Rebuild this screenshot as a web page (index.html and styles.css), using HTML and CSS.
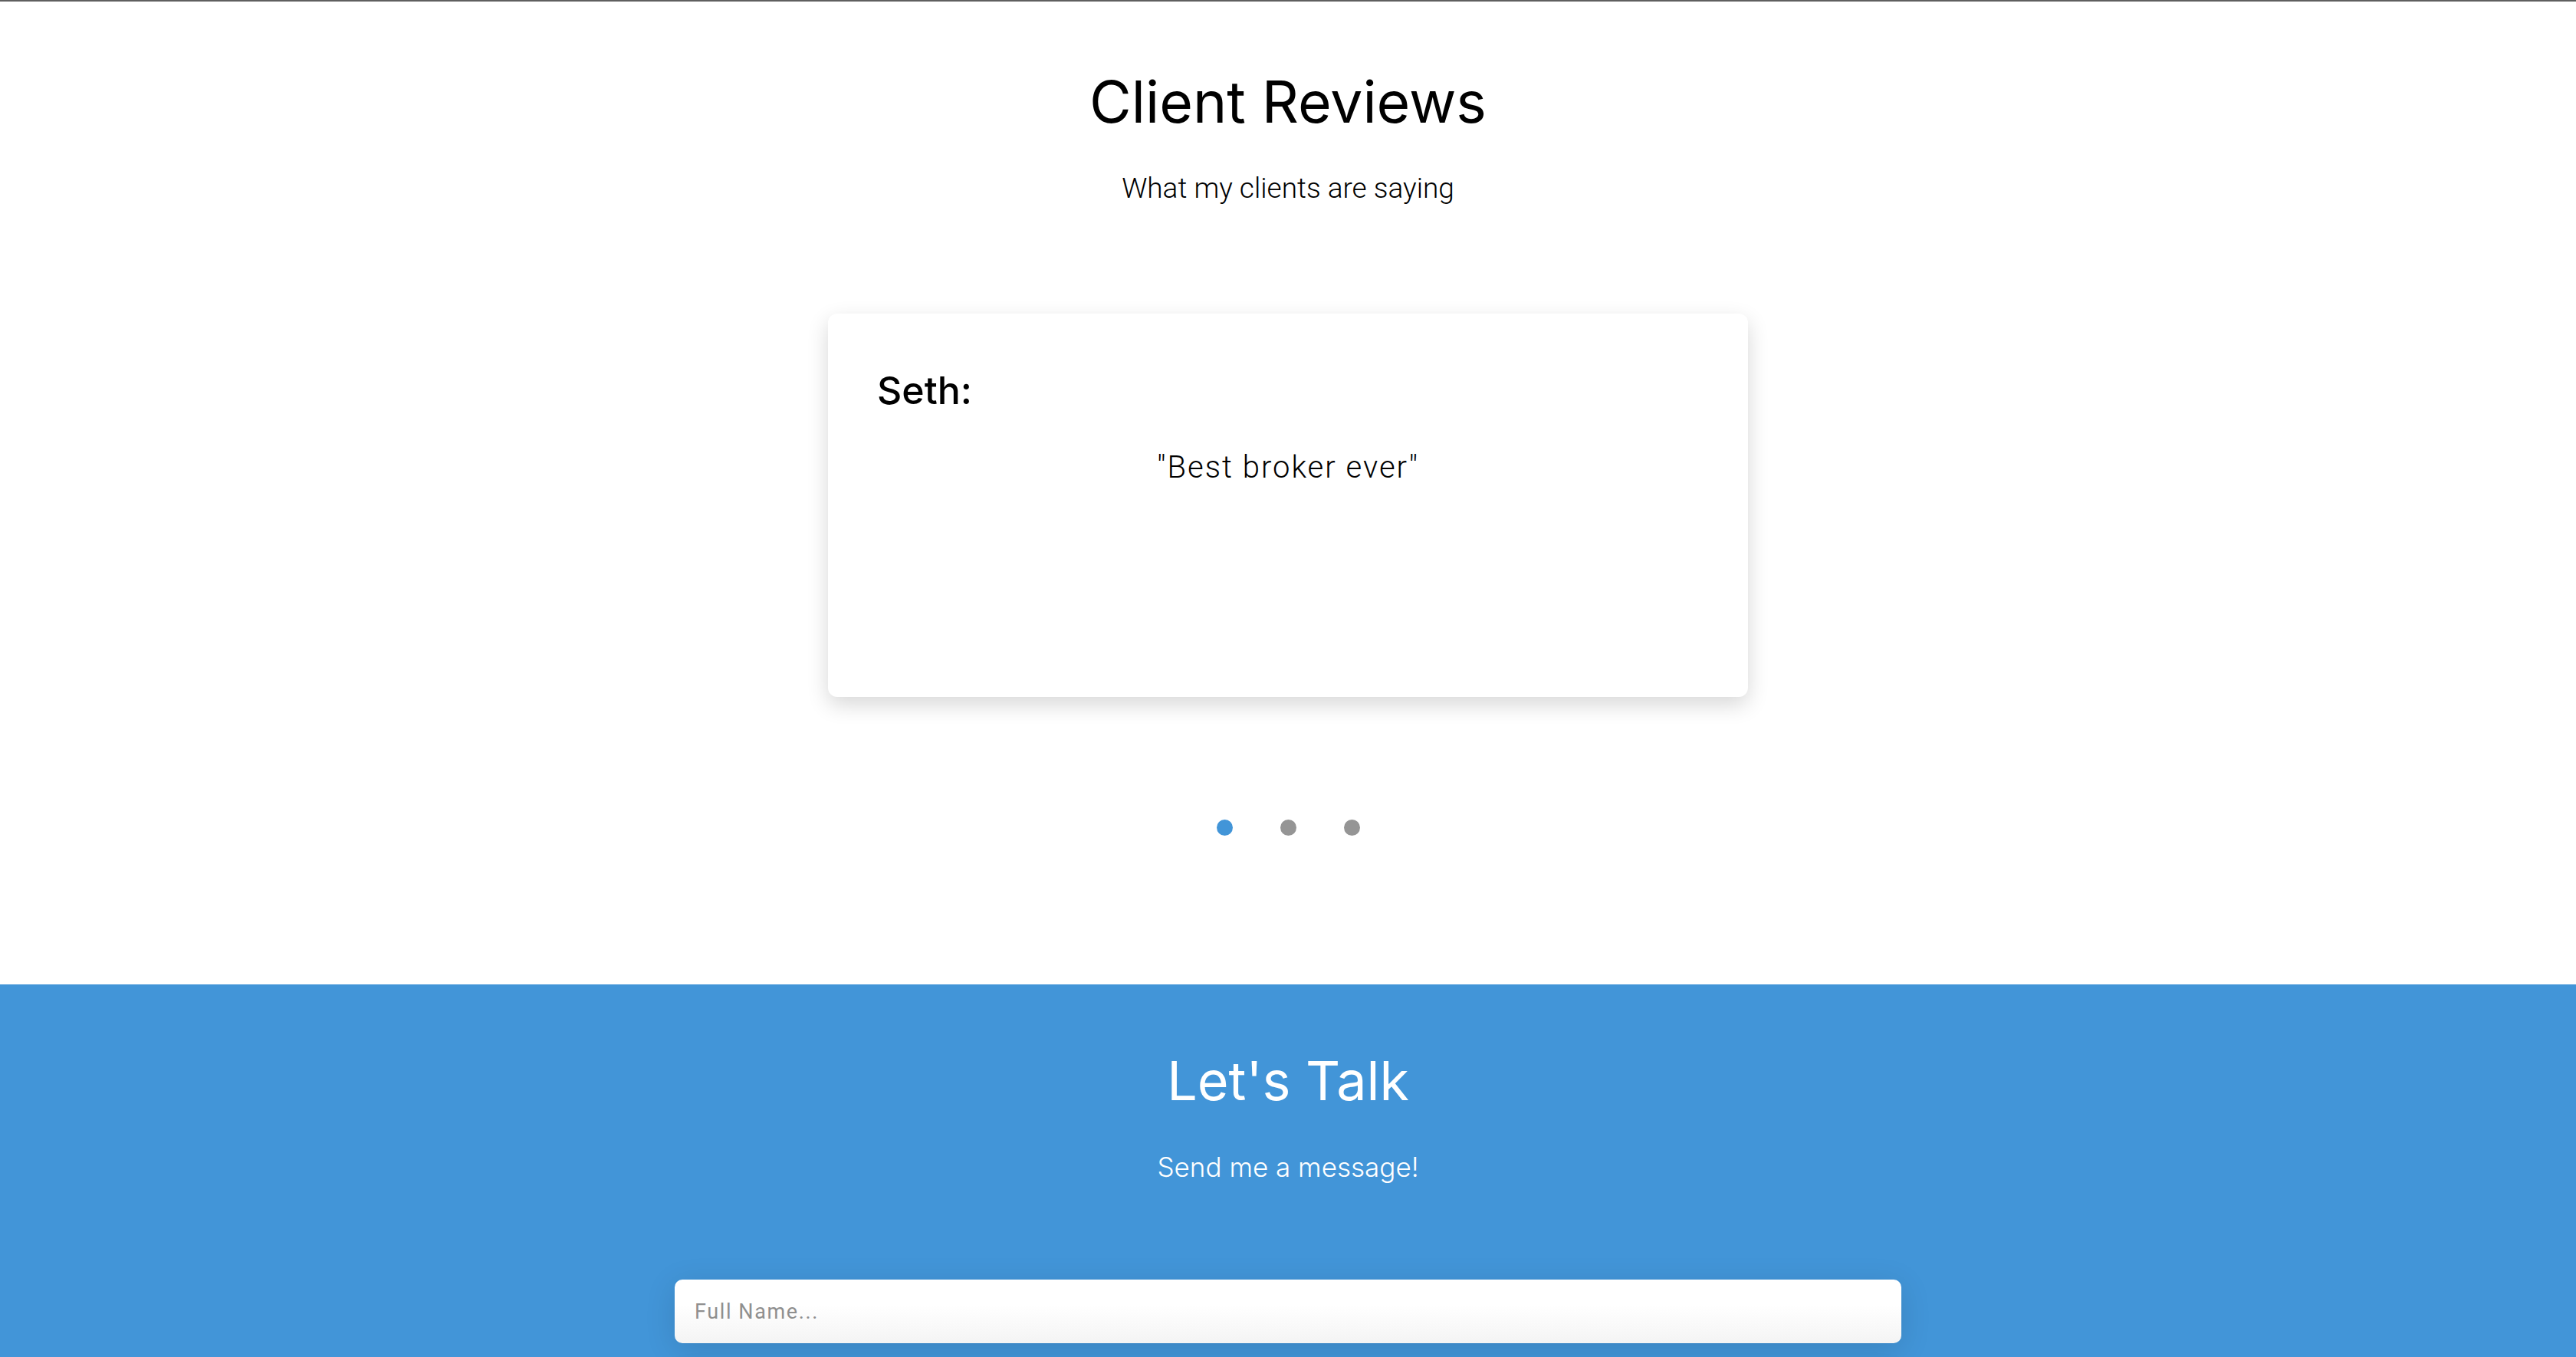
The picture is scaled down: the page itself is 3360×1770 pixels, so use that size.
FILE: index.html
```html
<!DOCTYPE html>
<html lang="en">
<head>
<meta charset="utf-8">
<title>Client Reviews</title>
<link rel="stylesheet" href="styles.css">
</head>
<body>
<section class="reviews">
  <h2 class="section-title">Client Reviews</h2>
  <p class="section-sub">What my clients are saying</p>
  <div class="slider">
    <article class="review-card">
      <h3 class="review-name">Seth:</h3>
      <p class="review-quote">"Best broker ever"</p>
    </article>
  </div>
  <div class="dots">
    <span class="dot active"></span>
    <span class="dot"></span>
    <span class="dot"></span>
  </div>
</section>
<section class="contact">
  <h2 class="contact-title">Let's Talk</h2>
  <p class="contact-sub">Send me a message!</p>
  <form class="contact-form">
    <input class="field" type="text" placeholder="Full Name...">
    <input class="field" type="email" placeholder="Email...">
    <textarea class="field area" placeholder="Message..."></textarea>
  </form>
</section>
</body>
</html>
```
FILE: styles.css
```css
html, body {
  margin: 0;
  padding: 0;
  background: #ffffff;
}
body {
  font-family: Roboto, "Liberation Sans", sans-serif;
  color: #000;
}
.reviews {
  border-top: 2px solid #5f5f5f;
  padding: 86px 0 0;
  height: 1284px;
  box-sizing: border-box;
  display: flex;
  flex-direction: column;
  align-items: center;
}
.section-title {
  font-family: Inter, "Noto Sans", sans-serif;
  font-weight: 400;
  font-size: 75px;
  line-height: 1.2;
  margin: 0;
}
.section-sub {
  font-weight: 300;
  font-size: 37px;
  line-height: 1.2;
  margin: 46px 0 0;
}
.slider {
  margin-top: 141px;
}
.review-card {
  width: 1200px;
  height: 500px;
  box-sizing: border-box;
  background: #fff;
  border-radius: 12px;
  box-shadow: 0 10px 28px rgba(0,0,0,0.16);
  padding: 70px 64px;
}
.review-name {
  font-family: Inter, "Noto Sans", sans-serif;
  font-weight: 500;
  font-size: 50px;
  line-height: 1.2;
  margin: 0;
}
.review-quote {
  font-weight: 300;
  font-size: 40px;
  line-height: 1.2;
  letter-spacing: 2px;
  text-align: center;
  margin: 47px 0 0;
}
.dots {
  display: flex;
  gap: 62px;
  margin-top: 160px;
}
.dot {
  width: 21px;
  height: 21px;
  border-radius: 50%;
  background: #959595;
}
.dot.active {
  background: #4295d8;
}
.contact {
  background: #4295d8;
  color: #fff;
  padding: 84px 0 200px;
  display: flex;
  flex-direction: column;
  align-items: center;
}
.contact-title {
  font-family: Inter, "Noto Sans", sans-serif;
  font-weight: 400;
  font-size: 70px;
  line-height: 1.2;
  margin: 0;
}
.contact-sub {
  font-family: Inter, "Noto Sans", sans-serif;
  font-weight: 300;
  font-size: 35px;
  line-height: 1.2;
  margin: 49px 0 0;
}
.contact-form {
  margin-top: 126px;
  width: 1600px;
  display: flex;
  flex-direction: column;
  gap: 40px;
}
.field {
  display: block;
  width: 100%;
  height: 83px;
  box-sizing: border-box;
  border: 0;
  border-radius: 10px;
  background: linear-gradient(#ffffff 40%, #f4f4f4);
  box-shadow: 0 8px 40px rgba(0,0,0,0.12);
  padding: 0 26px;
  font-family: Roboto, "Liberation Sans", sans-serif;
  font-size: 27px;
  letter-spacing: 1.6px;
  color: #333;
  outline: none;
}
.field::placeholder {
  color: #8f8f8f;
}
.area {
  height: 300px;
  padding-top: 24px;
  resize: none;
}
```
